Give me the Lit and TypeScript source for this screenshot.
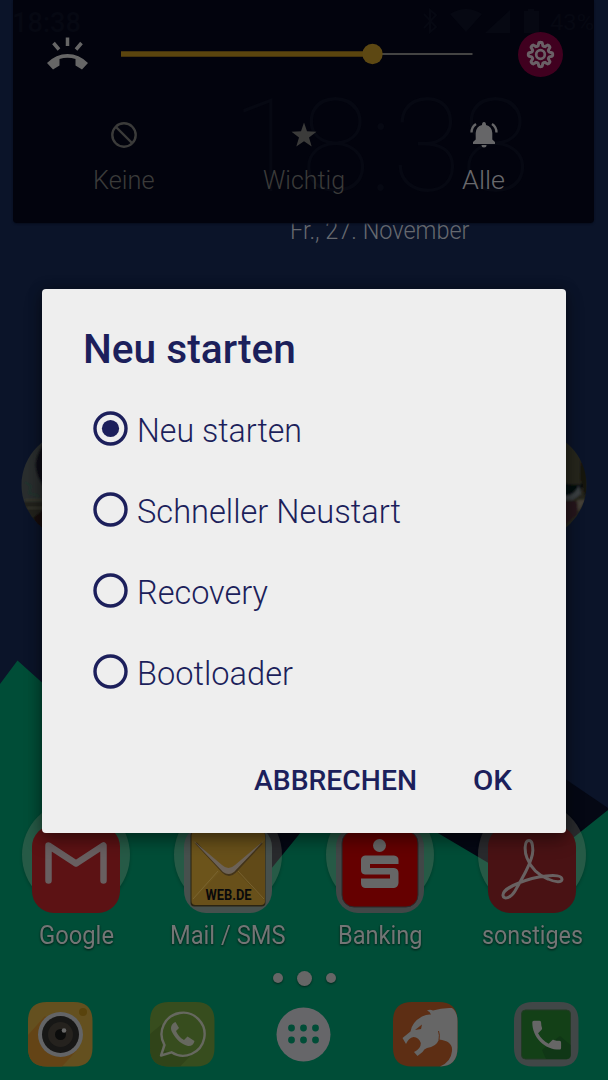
import { LitElement, html, svg, css } from "lit";
import { customElement, property, state } from "lit/decorators.js";

/** One line of text set to a fixed advance width. */
@customElement("fit-text")
class FitText extends LitElement {
  @property() text = "";
  @property({ type: Number }) width = 100;
  @property({ type: Number }) size = 26;
  static styles = css`
    :host { display: block; line-height: 0; }
    svg { display: block; overflow: visible; }
    text { fill: currentColor; }
  `;
  render() {
    return html`<svg width=${this.width} height=${this.size}>
      <text x="0" y=${this.size * 0.86} font-size=${this.size}
        textLength=${this.width} lengthAdjust="spacingAndGlyphs">${this.text}</text>
    </svg>`;
  }
}

const folders = [
  {
    label: "Google", width: 75,
    art: svg`<rect width="88" height="88" rx="22" fill="#5c1214"/>
      <path d="M16.500 55.500V20.500L44 38.500L71.500 20.500V55.500" fill="none" stroke="#685f60" stroke-width="6.500" stroke-linecap="round" stroke-linejoin="round"/>`,
  },
  {
    label: "Mail / SMS", width: 115.5,
    art: svg`<rect width="88" height="88" rx="22" fill="#46504d"/>
      <rect x="6.500" y="7" width="75" height="74.500" rx="4" fill="#2a2413"/>
      <rect x="7.500" y="6.500" width="73.500" height="73.500" rx="4" fill="#68501a"/>
      <path d="M8 15L37 46L8 76Z" fill="#6c541b"/><path d="M81 15L52 46L81 76Z" fill="#614a18"/>
      <path d="M9 74L34 46M80 74L54 46" stroke="#7d6836" stroke-width=".8"/>
      <path d="M12 18L39 47Q45 53 51 47L78 18" fill="none" stroke="#43341a" stroke-width="2"/>
      <path d="M8.500 15L38 40Q44.500 46 51 40L80.500 15L50 47Q44.500 51 39 47Z" fill="#6c6258"/>
      <text x="21.500" y="75" font-size="14" font-weight="700" textLength="46" lengthAdjust="spacingAndGlyphs" fill="#08090b">WEB.DE</text>`,
  },
  {
    label: "Banking", width: 84.5,
    art: svg`<rect width="88" height="88" rx="22" fill="#414747"/>
      <rect x="6" y="6" width="76" height="76" rx="12" fill="#650000" stroke="#292c2d" stroke-width="1"/>
      <circle cx="43.500" cy="20.500" r="6.500" fill="#666"/>
      <path d="M29 30.500H58Q62.500 31 62.500 35V39H34V43H58Q62.500 43.500 62.500 48V58Q62 62.500 58 63H29Q25 62.500 25 58V53.500H54V49.500H29Q25 49 25 45V35Q25 31 29 30.500Z" fill="#666"/>`,
  },
  {
    label: "sonstiges", width: 101,
    art: svg`<rect width="88" height="88" rx="22" fill="#491214"/>
      <path d="M41 15.500C36 15.500 36.500 27 39 33C42.500 42 50 50 60 54C68 57.500 73.500 57.500 74 54.500C74 50.500 67 50 58 51C48 52 40 54 31 58C23 61 14.500 66 15 70.500C15.500 75 23 73 27 66C31 59 35 52 38 46C42 38 45 31 44.800 25C44.600 19 44 15.500 41 15.500Z" fill="none" stroke="#686161" stroke-width="3" stroke-linejoin="round"/>`,
  },
];

const phone = "M6.62 10.790c1.440 2.830 3.760 5.140 6.590 6.590l2.200-2.200c.27-.27.67-.36 1.020-.24 1.120.37 2.330.57 3.570.57.55 0 1 .45 1 1V20c0 .55-.45 1-1 1-9.390 0-17-7.610-17-17 0-.55.45-1 1-1h3.500c.55 0 1 .45 1 1 0 1.250.2 2.450.57 3.570.11.35.03.74-.25 1.020z";
const squircle = "M19 0H46Q64.500 0 64.500 19V46Q64.500 64.500 46 64.500H19Q0 64.500 0 46V19Q0 0 19 0Z";

const dock = [
  svg`<path d=${squircle} fill="#64501f"/>
    <path d="M0 33L17 14L50 47L34 64.500H19Q0 64.500 0 46Z" fill="#644416"/>
    <circle cx="55" cy="10" r="4" fill="#59430d"/>
    <circle cx="32.500" cy="32.500" r="22.500" fill="#636466"/><circle cx="32.500" cy="32.500" r="18.500" fill="#171716"/>
    <circle cx="32.500" cy="32.500" r="12.500" fill="#25221e"/><circle cx="32.500" cy="32.500" r="5.500" fill="#0b0c0c"/>
    <circle cx="36" cy="28.500" r="2.300" fill="#696969"/>`,
  svg`<path d=${squircle} fill="#374d1e"/>
    <path d="M0 32L12 22V48L32 54L43 51L30 64.500H19Q0 64.500 0 46Z" fill="#304419"/>
    <path d="M11 53.500L14.500 43A21.500 21.500 0 1 1 21.500 50.300Z" fill="none" stroke="#66685f" stroke-width="2.400" stroke-linejoin="round"/>
    <path d="M25.500 20C21 22 20 26 22 30C26 38 32 42.500 38 44C41 44.500 44 42.500 44.500 39L37.500 34.500L34 38C30 36 27.500 32.500 26 29L29 26Z" fill="#66685f"/>`,
  svg`<circle cx="32.500" cy="32.500" r="27" fill="#666669"/>
    ${[20.5, 32.5, 44.5].map((x) => [26, 38].map((y) => svg`<circle cx=${x} cy=${y} r="3.400" fill="#004d37"/>`))}`,
  svg`<path d=${squircle} fill="#5d2e14"/>
    <path d="M34 8.500Q37 7 40 8.500Q49 5.500 59 6Q64.500 10 64.500 19V46Q64.500 64 47 64.500Q58 60 59 49Q60 39 46 37.500Q43 45 34 46Q31 47 29.500 50L24.500 54L21 50Q28 47 27.800 41Q26 35.500 20.500 35Q15.500 36 13 42L9.500 36L17.500 29.500Q19 20 29 14.500Q34 12 38 12.500Q37 9.500 34 8.500Z" fill="#666"/>
    <path d="M29 22.500L22 28L28 27Z" fill="#5d2e14"/><path d="M45.500 29Q47 33 46 38" fill="none" stroke="#5d2e14" stroke-width="1"/>`,
  svg`<path d=${squircle} fill="#414747"/><rect x="7.500" y="8" width="49" height="49" rx="4" fill="#134017" stroke="#233b25" stroke-width="1"/>
    <path d="M46 34L56.500 43V53Q56 57 52 57H32L28 48Z" fill="#103716"/>
    <g transform="translate(13.500 14) scale(1.600)"><path d=${phone} fill="#666" /></g>`,
];

const gear = (() => {
  const pts: string[] = [];
  for (let i = 0; i < 96; i++) {
    const a = (i / 96) * Math.PI * 2;
    const r = 10.5 + 1.7 * Math.tanh(2.4 * Math.cos(8 * a));
    pts.push(`${(22.5 + r * Math.sin(a)).toFixed(2)},${(22.5 - r * Math.cos(a)).toFixed(2)}`);
  }
  return pts.join(" ");
})();

@customElement("app-root")
class AppRoot extends LitElement {
  @state() selected = 0;

  static styles = css`
    :host { display: block; position: relative; width: 608px; height: 1080px; overflow: hidden; background: #0b1429; font-family: Roboto, "Liberation Sans", sans-serif; }
    svg { display: block; overflow: visible; }
    .wallpaper { position: absolute; inset: 0; }
    .home { position: relative; display: flex; flex-direction: column; height: 1080px; box-sizing: border-box; }
    .date { color: #66696f; font-weight: 350; margin: 217px 0 0 289.500px; height: 26px; }
    .folders { display: grid; grid-template-columns: repeat(4, 152px); margin-top: 558px; }
    .folder { display: flex; flex-direction: column; align-items: center; color: #737575; height: 157px; }
    .circle { width: 108px; height: 108px; box-sizing: border-box; border-radius: 50%; background: rgba(124, 120, 104, .31); display: flex; justify-content: center; padding-top: 24px; box-shadow: 0 2px 3px rgba(0, 20, 10, .25); }
    .folder fit-text { margin-top: 12.500px; filter: drop-shadow(0 1px 1px #001a12); }
    .dots { display: flex; justify-content: center; align-items: center; gap: 14px; height: 16px; margin-top: 12px; }
    .dot { width: 10px; height: 10px; border-radius: 50%; background: #666; box-shadow: 0 1px 2px #00291d; }
    .dot.current { width: 15px; height: 15px; }
    .dock { display: grid; grid-template-columns: repeat(5, 121.600px); justify-items: center; margin: 16px 0 0 -.5px; }
    .panel { position: absolute; left: 13.300px; top: 0; width: 581.200px; height: 222.500px; border-radius: 0 0 4px 4px; background: #02030d; box-shadow: 0 1px 2px #070d1d; display: flex; flex-direction: column; overflow: hidden; }
    .ghost { position: absolute; inset: 0; }
    .volume { position: relative; display: flex; align-items: center; margin-top: 31px; padding-left: 33.700px; height: 46px; }
    .track { margin: 0 45px 0 33.500px; }
    .modes { position: relative; display: grid; grid-template-columns: repeat(3, 180px); padding-left: 20.700px; margin-top: 43px; }
    .mode { display: flex; flex-direction: column; align-items: center; color: #3b3b3a; font-weight: 350; }
    .mode fit-text { margin-top: 16.500px; }
    .mode.active { color: #69696c; }
    .dialog { position: absolute; left: 42px; top: 289px; width: 523.700px; height: 544px; box-sizing: border-box; border-radius: 4px; background: #eee; color: #1c1f5b; box-shadow: 0 8px 18px rgba(0, 0, 0, .32), 0 0 14px rgba(0, 0, 0, .3); padding: 39.500px 54px 0 41px; display: flex; flex-direction: column; }
    .title { font-weight: 500; }
    .options { display: flex; flex-direction: column; margin: 19px 0 0 9.500px; }
    .option { display: flex; align-items: center; gap: 9.500px; height: 81px; cursor: pointer; font-weight: 350; }
    .option fit-text { padding-top: 2.500px; }
    .actions { display: flex; justify-content: flex-end; gap: 56px; margin-top: 54px; font-weight: 500; }
  `;

  private options = [
    { label: "Neu starten", width: 165 },
    { label: "Schneller Neustart", width: 264 },
    { label: "Recovery", width: 131 },
    { label: "Bootloader", width: 156 },
  ];

  private wallpaper() {
    return html`<svg class="wallpaper" width="608" height="1080">
      <defs>
        <clipPath id="cl"><circle cx="75.500" cy="485" r="54"/></clipPath>
        <clipPath id="cr"><circle cx="532.500" cy="485" r="54"/></clipPath>
        <filter id="soft"><feGaussianBlur stdDeviation="1"/></filter>
      </defs>
      <path d="M440 694L608 808V900H180V780Z" fill="#050814"/>
      <path d="M0 684L17.500 660.500L262 880L345 778L519 881L608 810V1080H0Z" fill="#004d37"/>
      <g clip-path="url(#cl)"><g filter="url(#soft)">
        <rect x="10" y="420" width="130" height="130" fill="#2a2f2f"/>
        <path d="M44 443Q36 455 35.500 465Q36 477 46 490V443Z" fill="#080b13"/>
        <path d="M15 502H48V550H15Z" fill="#24211b"/><path d="M25 500H46M27 508H46" stroke="#35342c" stroke-width="2"/>
        <path d="M25 482L31 486L29 493L39 496" fill="none" stroke="#20342d" stroke-width="2"/>
        <path d="M33 518L46 508V540Z" fill="#12110f"/>
      </g></g>
      <g clip-path="url(#cr)"><g filter="url(#soft)">
        <rect x="470" y="420" width="130" height="130" fill="#28251e"/>
        <path d="M581 458Q590 470 586 500L580 478Z" fill="#14130f"/>
        <path d="M560 482Q570 486 583 484L580 492L572 497L560 494Z" fill="#05070e"/>
        <path d="M579 485L581 494L573 500H562V496Q574 497 579 485Z" fill="#3a3f42"/>
        <path d="M560 501H584L577 514L560 530Z" fill="#26191c"/><path d="M577 500h9l-8 12z" fill="#454037"/>
      </g></g>
    </svg>`;
  }

  private panel() {
    return html`<section class="panel">
      <svg class="ghost" width="581" height="222" fill="#060812">
        <text x="-1" y="32" font-size="27" font-weight="500" textLength="69" lengthAdjust="spacingAndGlyphs">18:38</text>
        <text x="219" y="191" font-size="129" font-weight="100" textLength="298" lengthAdjust="spacingAndGlyphs">18:38</text>
        <path d="M411 14L423 27L417 32V10L423 15L411 28" fill="none" stroke="#060812" stroke-width="2"/>
        <path d="M437 14Q453 4 469 14L453 32ZM472 33L497 10V33ZM511 11h4v-2h6v2h5v22h-15z"/>
        <text x="537" y="30" font-size="22" textLength="44" lengthAdjust="spacingAndGlyphs">43%</text>
      </svg>
      <div class="volume">
        <svg width="41" height="34" viewBox="0 0 41 34">
          <path d="M0 26Q9 17 20.500 17T41 26L35 32.500L28.500 28.500V22Q20.500 19.500 12.500 22V28.500L6 32.500Z" fill="#666"/>
          <path d="M20.500 .5V9M6.500 6L12 12.500M34.500 6L29 12.500" stroke="#666" stroke-width="3.500"/>
        </svg>
        <svg class="track" width="351.500" height="20">
          <path d="M252 10H351.500" stroke="#444443" stroke-width="2"/>
          <path d="M0 10H252" stroke="#5b450e" stroke-width="5.500"/>
          <circle cx="251.500" cy="10" r="10.200" fill="#5d4813"/>
        </svg>
        <svg width="45" height="45">
          <circle cx="22.500" cy="22.500" r="22.500" fill="#40001f"/>
          <polygon points=${gear} fill="none" stroke="#6a6066" stroke-width="3" stroke-linejoin="round"/>
          <circle cx="22.500" cy="22.500" r="4.300" fill="none" stroke="#6a6066" stroke-width="2.700"/>
        </svg>
      </div>
      <div class="modes">
        <div class="mode">
          <svg width="30" height="30"><g fill="none" stroke="#3b3b3a" stroke-width="2.400"><circle cx="15" cy="15" r="11.700"/><path d="M6.500 6.500L23.500 23.500"/></g></svg>
          <fit-text text="Keine" .width=${61.5} .size=${26}></fit-text>
        </div>
        <div class="mode">
          <svg width="30" height="30"><path d="M15 2.500L18 11.300L27.500 11.700L20 17.500L22.700 26.500L15 21.300L7.300 26.500L10 17.500L2.500 11.700L12 11.300Z" fill="#3b3b3a"/></svg>
          <fit-text text="Wichtig" .width=${82} .size=${26}></fit-text>
        </div>
        <div class="mode active">
          <svg width="30" height="30">
            <path d="M15 2Q17 2 17 5Q23 6.500 23.300 13V19.500L26 22V24H4V22L6.700 19.500V13Q7 6.500 13 5Q13 2 15 2Z" fill="#666668"/>
            <path d="M12.500 25H17.500Q17.500 27.500 15 27.500T12.500 25Z" fill="#666668"/>
            <path d="M7 4Q2.500 7 2.500 12.500M23 4Q27.500 7 27.500 12.500" fill="none" stroke="#666668" stroke-width="2.300"/>
          </svg>
          <fit-text text="Alle" .width=${43} .size=${26}></fit-text>
        </div>
      </div>
    </section>`;
  }

  render() {
    return html`
      ${this.wallpaper()}
      <main class="home">
        <fit-text class="date" text="Fr., 27. November" .width=${179.5} .size=${25.5}></fit-text>
        <div class="folders">
          ${folders.map((f) => html`<div class="folder">
            <div class="circle"><svg width="88" height="88">${f.art}</svg></div>
            <fit-text text=${f.label} .width=${f.width} .size=${26}></fit-text>
          </div>`)}
        </div>
        <div class="dots"><i class="dot"></i><i class="dot current"></i><i class="dot"></i></div>
        <nav class="dock">${dock.map((d) => html`<svg width="64.500" height="64.500">${d}</svg>`)}</nav>
      </main>
      ${this.panel()}
      <section class="dialog" role="dialog">
        <fit-text class="title" text="Neu starten" .width=${213} .size=${40}></fit-text>
        <div class="options" role="radiogroup">
          ${this.options.map((o, i) => html`<div class="option" role="radio" @click=${() => (this.selected = i)}>
            <svg width="35" height="35"><circle cx="17.500" cy="17.500" r="15.500" fill="none" stroke="#1c1f5b" stroke-width="3.400"/>
              ${this.selected === i ? svg`<circle cx="17.500" cy="17.500" r="8.600" fill="#1c1f5b"/>` : ""}</svg>
            <fit-text text=${o.label} .width=${o.width} .size=${33.5}></fit-text>
          </div>`)}
        </div>
        <div class="actions">
          <fit-text text="ABBRECHEN" .width=${163} .size=${27.7}></fit-text>
          <fit-text text="OK" .width=${39} .size=${27.7}></fit-text>
        </div>
      </section>`;
  }
}
